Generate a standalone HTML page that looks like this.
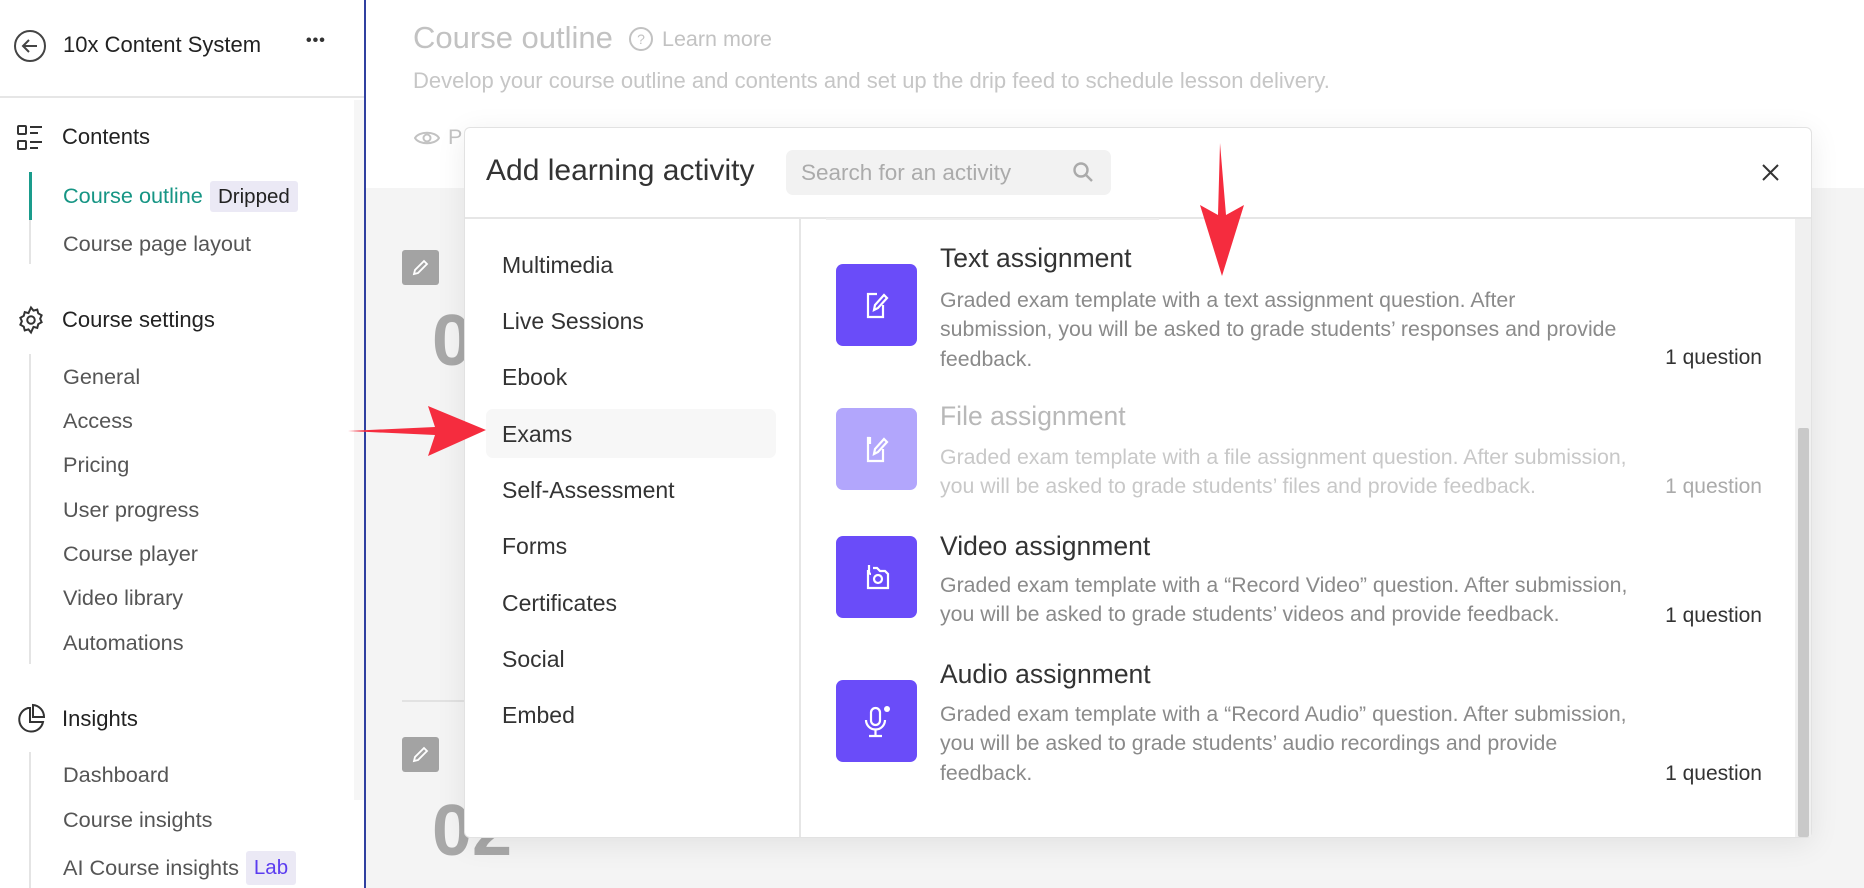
<!DOCTYPE html>
<html><head><meta charset="utf-8"><style>
*{margin:0;padding:0;box-sizing:border-box}
body{width:1864px;height:888px;overflow:hidden;background:#fff;font-family:"Liberation Sans",Arial,sans-serif;position:relative}
.a{position:absolute;white-space:nowrap}
.sb{color:#555;font-size:21.7px;left:63px;line-height:24px}
.sh{color:#222;font-size:22px;left:62px;line-height:24px}
.li{color:#333;font-size:23px;left:502px;line-height:26px}
.t{color:#333;font-size:26.5px;left:940px;line-height:30px}
.d{color:#8a8a8a;font-size:21.3px;left:940px;line-height:29.3px}
.q{color:#333;font-size:21px;right:102px;line-height:24px}
.ib{position:absolute;left:836px;width:81px;height:82px;border-radius:7px;background:#6a4cf9}
</style></head><body>
<!-- sidebar -->
<svg class="a" style="left:13px;top:29px" width="34" height="34" viewBox="0 0 34 34" fill="none" stroke="#444" stroke-width="2"><circle cx="17" cy="17" r="15"/><path d="M24 17H10M16 11l-6 6 6 6"/></svg>
<div class="a" style="left:63px;top:32px;font-size:22px;color:#222;font-weight:500">10x Content System</div>
<div class="a" style="left:306px;top:32px;font-size:16px;color:#333;font-weight:bold;letter-spacing:1px">•••</div>
<div class="a" style="left:0;top:96px;width:364px;height:2px;background:#e6e6e6"></div>
<div class="a" style="left:354px;top:100px;width:10px;height:700px;background:#f6f6f6"></div>
<div class="a" style="left:364px;top:0;width:2px;height:888px;background:#3040a0"></div>
<svg class="a" style="left:16px;top:124px" width="30" height="28" viewBox="0 0 30 28" fill="none" stroke="#333" stroke-width="2"><rect x="2" y="2" width="8" height="8" rx="1"/><rect x="2" y="17" width="8" height="8" rx="1"/><path d="M14 3h12M14 9h8M14 18h12M14 24h8"/></svg>
<div class="a sh" style="top:125px">Contents</div>
<div class="a" style="left:29px;top:172px;width:2px;height:92px;background:#e4e4e4"></div>
<div class="a" style="left:29px;top:172px;width:3px;height:48px;background:#1a9c8c"></div>
<div class="a sb" style="top:184px;color:#169584">Course outline</div>
<div class="a" style="left:210px;top:181px;width:88px;height:31px;background:#ebe9f5;border-radius:3px;color:#222;font-size:20.5px;line-height:31px;padding-left:8px">Dripped</div>
<div class="a sb" style="top:232px">Course page layout</div>
<svg class="a" style="left:16px;top:305px" width="30" height="30" viewBox="0 0 24 24" fill="none" stroke="#333" stroke-width="1.6"><circle cx="12" cy="12" r="3"/><path d="M12 2l2 2.5 3-.8.8 3 2.7 1.5-1.2 2.8 1.2 2.8-2.7 1.5-.8 3-3-.8L12 22l-2-2.5-3 .8-.8-3L3.5 15.8 4.7 13 3.5 10.2 6.2 8.7l.8-3 3 .8z"/></svg>
<div class="a sh" style="top:308px">Course settings</div>
<div class="a" style="left:29px;top:354px;width:2px;height:310px;background:#e4e4e4"></div>
<div class="a sb" style="top:365px">General</div>
<div class="a sb" style="top:409px">Access</div>
<div class="a sb" style="top:453px">Pricing</div>
<div class="a sb" style="top:498px">User progress</div>
<div class="a sb" style="top:542px">Course player</div>
<div class="a sb" style="top:586px">Video library</div>
<div class="a sb" style="top:631px">Automations</div>
<svg class="a" style="left:16px;top:703px" width="30" height="32" viewBox="0 0 30 32" fill="none" stroke="#333" stroke-width="2"><path d="M12 5A12 12 0 1 0 27 19H14V5z"/><path d="M17 2v12h11A12 12 0 0 0 17 2z"/></svg>
<div class="a sh" style="top:707px">Insights</div>
<div class="a" style="left:29px;top:752px;width:2px;height:136px;background:#e4e4e4"></div>
<div class="a sb" style="top:763px">Dashboard</div>
<div class="a sb" style="top:808px">Course insights</div>
<div class="a sb" style="top:856px">AI Course insights</div>
<div class="a" style="left:246px;top:851px;width:50px;height:34px;background:#ebe9f5;border-radius:3px;color:#5b3cf0;font-size:20.5px;line-height:34px;text-align:center">Lab</div>
<!-- main bg -->
<div class="a" style="left:366px;top:188px;width:1498px;height:700px;background:#f4f4f4"></div>
<div class="a" style="left:413px;top:20px;font-size:31px;color:#c2c2c2">Course outline</div>
<svg class="a" style="left:628px;top:26px" width="26" height="26" viewBox="0 0 26 26" fill="none" stroke="#c2c2c2" stroke-width="2"><circle cx="13" cy="13" r="11"/><text x="13" y="18" font-size="14" text-anchor="middle" fill="#c2c2c2" stroke="none" font-family="Liberation Sans">?</text></svg>
<div class="a" style="left:662px;top:27px;font-size:21.5px;color:#c2c2c2">Learn more</div>
<div class="a" style="left:413px;top:68px;font-size:22px;color:#c6c6c6">Develop your course outline and contents and set up the drip feed to schedule lesson delivery.</div>
<svg class="a" style="left:414px;top:128px" width="26" height="20" viewBox="0 0 26 20" fill="none" stroke="#c2c2c2" stroke-width="2"><path d="M1 10C5 3 21 3 25 10 21 17 5 17 1 10z"/><circle cx="13" cy="10" r="3.5"/></svg>
<div class="a" style="left:448px;top:125px;font-size:21.5px;color:#c2c2c2">P</div>
<div class="a" style="left:402px;top:250px;width:37px;height:35px;background:#a3a3a3;border-radius:3px"></div>
<svg class="a" style="left:410px;top:257px" width="21" height="21" viewBox="0 0 21 21" fill="none" stroke="#fff" stroke-width="1.8"><path d="M4 17l1-4L14 4l3 3-9 9z"/></svg>
<div class="a" style="left:432px;top:300px;font-size:72px;font-weight:bold;color:#a8a8a8">0</div>
<div class="a" style="left:402px;top:700px;width:62px;height:2px;background:#e2e2e2"></div>
<div class="a" style="left:402px;top:737px;width:37px;height:35px;background:#a3a3a3;border-radius:3px"></div>
<svg class="a" style="left:410px;top:744px" width="21" height="21" viewBox="0 0 21 21" fill="none" stroke="#fff" stroke-width="1.8"><path d="M4 17l1-4L14 4l3 3-9 9z"/></svg>
<div class="a" style="left:432px;top:790px;font-size:72px;font-weight:bold;color:#a8a8a8">02</div>
<!-- modal -->
<div class="a" style="left:464px;top:127px;width:1348px;height:711px;background:#fff;border:1px solid #e2e2e2;border-radius:6px;box-shadow:0 6px 30px rgba(0,0,0,.08)"></div>
<div class="a" style="left:486px;top:154px;font-size:30px;color:#333">Add learning activity</div>
<div class="a" style="left:786px;top:150px;width:325px;height:45px;background:#f2f2f2;border-radius:7px"></div>
<div class="a" style="left:801px;top:160px;font-size:22.5px;color:#ababab">Search for an activity</div>
<svg class="a" style="left:1072px;top:161px" width="22" height="22" viewBox="0 0 22 22" fill="none" stroke="#aaa" stroke-width="2.4"><circle cx="9" cy="9" r="6.5"/><path d="M14 14l6 6"/></svg>
<svg class="a" style="left:1761px;top:163px" width="19" height="19" viewBox="0 0 19 19" stroke="#333" stroke-width="2"><path d="M2 2l15 15M17 2L2 17"/></svg>
<div class="a" style="left:465px;top:217px;width:1346px;height:2px;background:#e6e6e6"></div>
<div class="a" style="left:799px;top:219px;width:2px;height:618px;background:#e6e6e6"></div>
<div class="a" style="left:826px;top:218px;width:333px;height:2px;background:#eee"></div>
<div class="a" style="left:1795px;top:219px;width:16px;height:618px;background:#f0f0f0"></div>
<div class="a" style="left:1798px;top:428px;width:11px;height:409px;background:#c9c9c9;border-radius:2px"></div>
<div class="a" style="left:486px;top:409px;width:290px;height:49px;background:#f7f7f7;border-radius:7px"></div>
<div class="a li" style="top:252px">Multimedia</div>
<div class="a li" style="top:308px">Live Sessions</div>
<div class="a li" style="top:364px">Ebook</div>
<div class="a li" style="top:421px">Exams</div>
<div class="a li" style="top:477px">Self-Assessment</div>
<div class="a li" style="top:533px">Forms</div>
<div class="a li" style="top:590px">Certificates</div>
<div class="a li" style="top:646px">Social</div>
<div class="a li" style="top:702px">Embed</div>
<!-- items -->
<div class="ib" style="top:264px"></div>
<svg class="a" style="left:856px;top:285px" width="40" height="40" viewBox="0 0 40 40" fill="none" stroke="#fff" stroke-width="2.2"><path d="M21 9h-9v23h15V20"/><path d="M18 25l1-5 9-10 3 3-9 10z"/></svg>
<div class="a t" style="top:243px">Text assignment</div>
<div class="a d" style="top:286px">Graded exam template with a text assignment question. After<br>submission, you will be asked to grade students’ responses and provide<br>feedback.</div>
<div class="a q" style="top:346px">1 question</div>
<div class="ib" style="top:408px;background:#b2a6fc"></div>
<svg class="a" style="left:856px;top:429px" width="40" height="40" viewBox="0 0 40 40" fill="none" stroke="#fff" stroke-width="2.2"><path d="M14 9h-2v23h15V20"/><path d="M18 25l1-5 9-10 3 3-9 10z"/><path d="M14 8v7"/></svg>
<div class="a t" style="top:401px;color:#b8b8b8">File assignment</div>
<div class="a d" style="top:443px;color:#c8c8c8">Graded exam template with a file assignment question. After submission,<br>you will be asked to grade students’ files and provide feedback.</div>
<div class="a q" style="top:475px;color:#aaa">1 question</div>
<div class="ib" style="top:536px"></div>
<svg class="a" style="left:856px;top:557px" width="40" height="40" viewBox="0 0 40 40" fill="none" stroke="#fff" stroke-width="2.2"><path d="M12 13v18h20V17l-3-3h-5l-3-3h-4"/><circle cx="22" cy="22" r="4"/><path d="M13 8v7a2 2 0 0 0 2 2"/></svg>
<div class="a t" style="top:531px">Video assignment</div>
<div class="a d" style="top:571px">Graded exam template with a “Record Video” question. After submission,<br>you will be asked to grade students’ videos and provide feedback.</div>
<div class="a q" style="top:604px">1 question</div>
<div class="ib" style="top:680px"></div>
<svg class="a" style="left:856px;top:700px" width="40" height="42" viewBox="0 0 40 42" fill="none" stroke="#fff" stroke-width="2.2"><rect x="15" y="8" width="9" height="17" rx="4.5"/><path d="M10 20a9.5 9.5 0 0 0 19 0M19.5 30v5M13 36h13"/><circle cx="31" cy="9" r="3" fill="#fff" stroke="none"/></svg>
<div class="a t" style="top:659px">Audio assignment</div>
<div class="a d" style="top:700px">Graded exam template with a “Record Audio” question. After submission,<br>you will be asked to grade students’ audio recordings and provide<br>feedback.</div>
<div class="a q" style="top:762px">1 question</div>
<!-- arrows -->
<svg class="a" style="left:340px;top:400px" width="150" height="60" viewBox="0 0 150 60"><path d="M8 31L95 27 88 6 146 30 88 56 95 35z" fill="#f52c3e"/></svg>
<svg class="a" style="left:1196px;top:140px" width="52" height="140" viewBox="0 0 52 140"><path d="M24 3L30 75 48 65 26 136 4 65 22 75z" fill="#f52c3e"/></svg>
</body></html>
